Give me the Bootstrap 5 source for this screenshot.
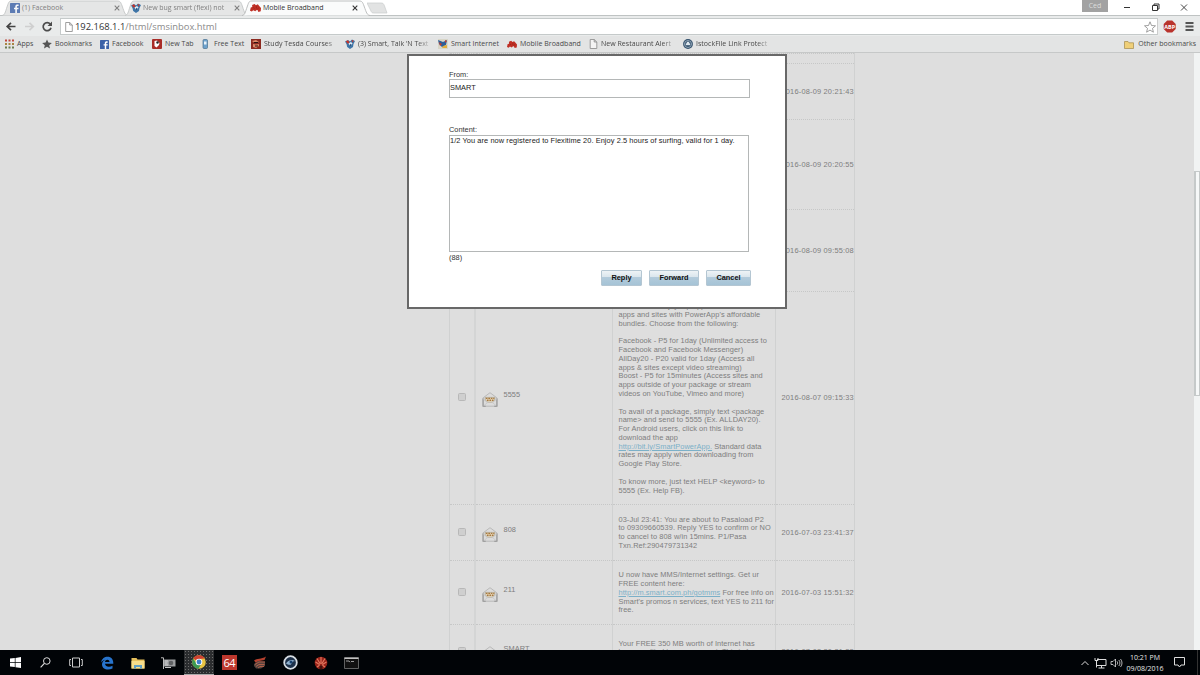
<!DOCTYPE html>
<html lang="en">
<head>
    <meta charset="UTF-8">
    <meta name="viewport" content="width=device-width, initial-scale=1.0">
    <title>Mobile Broadband</title>
    <link rel="stylesheet" href="https://cdn.jsdelivr.net/npm/bootstrap@5.3.0/dist/css/bootstrap.min.css">
    <style>
        body { width: 1200px; height: 675px; font-family: "Liberation Sans", Arial, sans-serif; font-size: 7.4px; line-height: 8.78px; background: #dedede; }
        svg { flex: none; display: block; }

        /* browser chrome */
        .browser-ui { font-family: "Open Sans", "Noto Sans", sans-serif; font-size: 7px; line-height: 10px; color: #484848; white-space: nowrap; }
        .tab-strip { height: 16px; background: #fff; border-bottom: 1px solid #bfc3c3; }
        .tab-item { height: 16px; padding: 0 8px 0 8px; color: #808080; margin-right: -3px; }
        .tab-item .tab-shape { position: absolute; left: 0; top: 0; width: 100%; height: 16px; }
        .tab-item > .tab-inner { z-index: 1; }
        .tab-one { width: 126px; margin-left: 2px; }
        .tab-two { width: 123px; padding-left: 6px; letter-spacing: -.03px; }
        .tab-three { width: 128px; margin-left: -3px; color: #333; z-index: 2; }
        .tab-title { flex: 1; margin-left: 2px; }
        .fade-end { -webkit-mask-image: linear-gradient(to right, #000 86%, rgba(0, 0, 0, .2)); mask-image: linear-gradient(to right, #000 86%, rgba(0, 0, 0, .2)); }
        .user-tag { width: 26px; height: 12px; background: #a2a2a2; color: #ddd; line-height: 11px; margin-right: 15px; }
        .address-bar { height: 20px; background: #e9ebeb; }
        .url-box { height: 17px; margin-top: 2px; background: #fff; border: 1px solid #c5caca; border-right-color: #ccc; font-size: 9.4px; color: #8a8a8a; line-height: 15px; }
        .url-text { padding-left: 2px; }
        .url-box b { font-weight: 400; color: #333; }
        .bookmark-bar { height: 17px; background: #e3e4e4; border-bottom: 1px solid #c6c8c8; padding-left: 4px; letter-spacing: .02px; }
        .bookmark-item svg { margin-right: 3px; }
        .bookmark-item:nth-child(1) { width: 38px; }
        .bookmark-item:nth-child(2) { width: 58px; }
        .bookmark-item:nth-child(3) { width: 52px; }
        .bookmark-item:nth-child(4) { width: 49px; }
        .bookmark-item:nth-child(5) { width: 50px; }
        .bookmark-item:nth-child(6) { width: 86px; margin-right: 8px; }
        .bookmark-item:nth-child(7) { width: 84px; margin-right: 9px; letter-spacing: -.02px; }
        .bookmark-item:nth-child(8) { width: 69px; }
        .bookmark-item:nth-child(9) { width: 82px; }
        .bookmark-item:nth-child(10) { width: 85px; margin-right: 9px; }
        .bookmark-item:nth-child(11) { width: 86px; }

        /* page behind the dialog */
        .page-view { height: 597px; background: #dedede; }
        .inbox { width: 405px; margin-left: 449px; table-layout: fixed; color: #7d7d7d; border-collapse: collapse; letter-spacing: .07px; }
        .inbox td { border: 1px solid #d0d1d1; border-style: dotted solid; padding: 1.500px 0 0 5.500px; vertical-align: middle; white-space: nowrap; }
        .inbox tr > td { border-top-color: #c6c7c7; border-bottom-color: #c6c7c7; }
        .inbox td:first-child { border-right: 2px solid #d4d5d5; }
        .inbox a { color: #7bb0c8; }
        .inbox .mail-cell { padding: 0 0 1px 6px; }
        .sender { padding-bottom: 4px; padding-left: 6px; }
        .inbox .when { letter-spacing: .2px; padding-left: 5.500px; }
        .inbox .check-cell { padding: 0 0 2px 8px; }
        .tick-box { width: 8px; height: 8px; border: 1px solid #b8b8b8; border-radius: 1.500px; background: #cfcfcf; }
        .h-first { height: 10px; }
        .h-one { height: 56px; }
        .h-two { height: 90px; }
        .h-three { height: 82px; }
        .h-four { height: 213px; }
        .h-six { height: 64px; }
        .h-last { height: 55px; }

        /* message dialog */
        .message-box { left: 407px; top: 54px; width: 380px; height: 255px; border: 2px solid #686868; background: #fff; color: #333; padding: 15px 34px 0 40px; z-index: 5; }
        .from-input { width: 301px; height: 19px; border: 1px solid #b4b7b7; padding: 4px 0 0 0; color: #222; margin-bottom: 28px; }
        .from-label { margin-bottom: -.6px; }
        .content-label { margin-bottom: -.4px; }
        .content-input { width: 300px; height: 117px; border: 1px solid #b4b7b7; color: #222; letter-spacing: .08px; margin-bottom: 2px; line-height: 9px; }
        .button-row { margin-top: 8px; gap: 7px; }
        .btn-modem { --bs-btn-padding-x: 0; --bs-btn-padding-y: 0; --bs-btn-font-size: 7.4px; --bs-btn-line-height: 14px; --bs-btn-border-radius: 1px; height: 16px; font-weight: 700; color: #111; border: 1px solid #b4c6d2; background: linear-gradient(#eef3f6 0, #dbe6ed 42%, #b3cbdb 45%, #a5c3d6 100%); }
        .w-reply { width: 41px; }
        .w-forward { width: 50px; }
        .w-cancel { width: 45px; }

        .scroll-track { right: 0; top: 53px; width: 6px; height: 597px; background: #f1f3f3; z-index: 3; }
        .scroll-thumb { margin-top: 118px; height: 225px; border: 1px solid #c5c9c9; border-width: 1px 1px 1px 2px; background: #f6f8f8; }

        /* taskbar */
        .win-taskbar { height: 25px; background: #010407; color: #e8e8e8; font-family: "Open Sans", "Noto Sans", sans-serif; font-size: 7px; line-height: 11px; }
        .task-cell { width: 30.6px; height: 25px; }
        .task-cell.running { background: radial-gradient(#6c6c6c 25%, #2b2d2f 30%) 0 0 / 3px 3px; border-bottom: 1px solid #aaa; }
        .clock { width: 40px; margin-right: 9px; letter-spacing: -.04px; }
        .desk-edge { width: 1px; height: 25px; background: #333; margin: 0 2px 0 12px; }
    </style>
</head>
<body class="overflow-hidden position-relative">
    <!-- shared icons -->
    <svg width="0" height="0" class="position-absolute">
        <symbol id="i-fb" viewBox="0 0 10 10"><rect width="10" height="10" rx=".6" fill="#3c62a8"/><path d="M6.900 10V6.200h1.500l.2-1.500H6.900V3.800c0-.5.2-.8.8-.8h.9V1.600C7 1.300 5.300 1.600 5.300 3.600v1.100H4v1.500h1.300V10z" fill="#fff"/></symbol>
        <symbol id="i-smart" viewBox="0 0 10 10"><path d="M0 2.500 3 1l2 1.500L7 .6 10 2 8.500 5 8 8 5 10 2.200 8 1.500 5z" fill="#3d75a8"/><path d="M.8 2.300 3 1.300l1.500 2L3 5zM6.500 1l2.300.7L7.500 3.500z" fill="#c5352b"/><path d="M3.500 4.500 6 3l1.500 1.500-2.200 3z" fill="#eef3f8"/><path d="M4.500 6l1.500-1.500.5 1.500L5 8z" fill="#27517d"/></symbol>
        <symbol id="i-huawei" viewBox="0 0 12 10"><path d="M0 8 .8 4.500 2.500 4 2.300 1.800 5 .5 6.500 2 8.500 1 10.300 3 12 5 11.700 8.500 9.200 9.300 8.200 7.200 6.800 7.400 5.800 8.500 3.500 7.400 2 8.800z" fill="#bf2f25"/><path d="M3.500 4.500 5 5.500M7 3v2.500M9.500 5 8 6" stroke="#8c1c14" stroke-width=".6"/></symbol>
        <symbol id="i-page" viewBox="0 0 8 10"><path d="M.7.5h4L7.300 3v6.500H.7zM4.700.5V3h2.600" fill="#fff" fill-opacity=".6" stroke="#888" stroke-width=".8"/></symbol>
        <symbol id="i-close" viewBox="0 0 6 6"><path d="M.7.7l4.600 4.600M5.300.7.7 5.300" stroke="currentColor" stroke-width="1.100"/></symbol>
        <symbol id="i-mail" viewBox="0 0 15 14"><path d="M1 5.500 7.500.6 14 5.500V13.300H1z" fill="#dcdcdc" stroke="#b2b2b2" stroke-width=".8"/><path d="M3 5h9v2.500L9.500 9.500h-4L3 7.500z" fill="#e8dcc2" stroke="#a09a8c" stroke-width=".6"/><path d="M3.600 6h8M4.600 7.700h6.200" stroke="#a87a40" stroke-width="1.200" stroke-dasharray="1.600 .7"/><path d="M1 6v7.300h2.500M14 6v7.300h-2.500" fill="none" stroke="#959595" stroke-width="1"/><path d="M1 6.500 5 10l-3.500 3M14 6.500 10 10l3.500 3" fill="none" stroke="#c0c0c0" stroke-width=".6"/></symbol>
        <symbol id="t-on" viewBox="0 0 129 16" preserveAspectRatio="none"><path d="M0 15.500C3 15 3 13 5.500 6 7 1.500 7.500 1 10 1h108c3 0 3.500 1 5 5 2.500 7 3 9 6 9.500" fill="#fafbfb" stroke="#b6b9b9" stroke-width=".9"/></symbol>
        <symbol id="t-off" viewBox="0 0 129 16" preserveAspectRatio="none"><path d="M0 15.500C3 15 3 13 5.500 6 7 1.500 7.500 1 10 1h108c3 0 3.500 1 5 5 2.500 7 3 9 6 9.500" fill="#e5e6e6" stroke="#c3c6c6" stroke-width=".9"/></symbol>
    </svg>

    <header class="browser-ui">
        <div class="tab-strip d-flex">
            <div class="tab-item tab-one position-relative d-flex">
                <svg class="tab-shape"><use href="#t-off"/></svg>
                <div class="tab-inner position-relative d-flex align-items-center w-100">
                    <svg width="10" height="10" opacity=".8"><use href="#i-fb"/></svg>
                    <span class="tab-title">(1) Facebook</span>
                    <svg width="6" height="6"><use href="#i-close"/></svg>
                </div>
            </div>
            <div class="tab-item tab-two position-relative d-flex">
                <svg class="tab-shape"><use href="#t-off"/></svg>
                <div class="tab-inner position-relative d-flex align-items-center w-100">
                    <svg width="10" height="10"><use href="#i-smart"/></svg>
                    <span class="tab-title fade-end">New bug smart (flexi) not</span>
                    <svg width="6" height="6"><use href="#i-close"/></svg>
                </div>
            </div>
            <div class="tab-item tab-three position-relative d-flex">
                <svg class="tab-shape"><use href="#t-on"/></svg>
                <div class="tab-inner position-relative d-flex align-items-center w-100">
                    <svg width="11" height="10"><use href="#i-huawei"/></svg>
                    <span class="tab-title">Mobile Broadband</span>
                    <svg width="6" height="6" class="me-1"><use href="#i-close"/></svg>
                </div>
            </div>
            <svg width="22" height="16"><path d="M0 3h14c2 0 2.500.5 3.500 3l2.500 7H7c-2 0-2.500-.5-3.500-3z" fill="#e2e3e3" stroke="#c9cccc" stroke-width=".7"/></svg>
            <div class="user-tag text-center ms-auto">Ced</div>
            <svg width="77" height="15" fill="none" stroke="#333"><path d="M1 7.500h6" stroke-width="1"/><path d="M29.500 5.500h5v5h-5zM31 5.500V4h5v5h-1.500" stroke-width="1"/><path d="M58 4.500l6 6M64 4.500l-6 6" stroke-width=".9"/></svg>
        </div>

        <div class="address-bar d-flex">
            <svg width="60" height="20" fill="none"><path d="M15.500 10.500h-8M11 6.800 7.200 10.500l3.800 3.700" stroke="#444" stroke-width="1.700"/><path d="M25 10.500h8M29.500 6.800l3.800 3.700-3.800 3.700" stroke="#cfcfcf" stroke-width="1.700"/><path d="M50.300 8.200A4 4 0 1 0 51 11.800" stroke="#4c4c4c" stroke-width="1.700"/><path d="M52 5.500V10h-4.500z" fill="#4c4c4c"/></svg>
            <div class="url-box d-flex align-items-center flex-grow-1">
                <svg width="8" height="10" class="ms-1"><use href="#i-page"/></svg>
                <span class="url-text"><b>192.168.1.1</b>/html/smsinbox.html</span>
                <svg width="13" height="12" class="ms-auto" viewBox="0 0 13 12"><path d="M6 .8l1.500 3.700 4 .3-3 2.600.9 3.800L6 9.100l-3.400 2.100.9-3.800-3-2.600 4-.3z" fill="#fff" stroke="#888" stroke-width=".8"/></svg>
            </div>
            <svg width="42" height="20"><path d="M9.200 4.500h5l3.500 3.500v5l-3.500 3.500h-5L5.700 13V8z" fill="#b9332c"/><text x="11.700" y="12.600" font-size="5.500" font-weight="700" fill="#fff" text-anchor="middle">ABP</text><path d="M27.500 7h8M27.500 10.500h8M27.500 14h8" stroke="#555" stroke-width="1.900"/></svg>
        </div>

        <div class="bookmark-bar d-flex align-items-center">
            <div class="bookmark-item d-flex align-items-center"><svg width="10" height="10"><path d="M1 1.500h9" stroke="#c0483c" stroke-width="2" stroke-dasharray="2 1.500"/><path d="M1 5h9" stroke="#a88440" stroke-width="2" stroke-dasharray="2 1.500"/><path d="M1 8.500h9" stroke="#6d7c50" stroke-width="2" stroke-dasharray="2 1.500"/></svg>Apps</div>
            <div class="bookmark-item d-flex align-items-center"><svg width="10" height="10"><path d="M5 .4l1.400 3.200 3.500.3-2.700 2.300.8 3.400L5 7.800 2 9.600l.8-3.400L.1 3.900l3.500-.3z" fill="#555"/></svg>Bookmarks</div>
            <div class="bookmark-item d-flex align-items-center"><svg width="9" height="9"><use href="#i-fb"/></svg>Facebook</div>
            <div class="bookmark-item d-flex align-items-center"><svg width="10" height="10"><rect width="10" height="10" rx="1" fill="#a92c27"/><path d="M2.500 2 5 1.500 7.500 4 7 6 4.500 8.500 2.500 7z" fill="#fff"/><circle cx="5.500" cy="3.500" r="1.200" fill="#222"/></svg>New Tab</div>
            <div class="bookmark-item d-flex align-items-center"><svg width="10" height="10"><rect x="2" y=".5" width="4.500" height="9" rx="1" fill="#6ea2cc" stroke="#48708f" stroke-width=".7"/><path d="M3 2.500h2.500v3H3z" fill="#e8f2fa"/></svg>Free Text</div>
            <div class="bookmark-item fade-end d-flex align-items-center"><svg width="10" height="10"><rect width="10" height="10" fill="#8c2a20"/><path d="M1 2l4-1 3 2-2 1-3-.5zM2 5l3 .5L8 5v2L5 9 2 8z" fill="#db8a6a"/><path d="M3 3.500h4M4 7h3" stroke="#2d1411"/></svg>Study Tesda Courses</div>
            <div class="bookmark-item fade-end d-flex align-items-center"><svg width="10" height="10"><use href="#i-smart"/></svg>(3) Smart, Talk 'N Text</div>
            <div class="bookmark-item d-flex align-items-center"><svg width="10" height="10"><rect width="10" height="10" fill="#d8d6c8"/><path d="M0 1l5 2 4-2-1 5-4 2-3-3z" fill="#2e5f9a"/><path d="M1 3l3 2-2 2zM7 1l2 1-2 2z" fill="#c33c2c"/><path d="M5 7l4-1v3H4z" fill="#e2ad3c"/></svg>Smart Internet</div>
            <div class="bookmark-item d-flex align-items-center"><svg width="10" height="9"><use href="#i-huawei"/></svg>Mobile Broadband</div>
            <div class="bookmark-item fade-end d-flex align-items-center"><svg width="9" height="10"><use href="#i-page"/></svg>New Restaurant Alert</div>
            <div class="bookmark-item fade-end d-flex align-items-center"><svg width="10" height="10"><circle cx="5" cy="5" r="4.900" fill="#33506c"/><circle cx="5" cy="5" r="3.500" fill="none" stroke="#b9c8d6" stroke-width=".7"/><path d="M3 6V4.500h4V6zM4 4.500V3h2v1.500" fill="#dfe8ef" stroke="#dfe8ef" stroke-width=".4"/></svg>IstockFile Link Protect</div>
            <div class="d-flex align-items-center ms-auto me-1"><svg width="10" height="9" class="me-1"><path d="M.5 8.500v-7h3.500l1 1.300h4.500v5.700z" fill="#efcf78" stroke="#a38a4b" stroke-width=".7"/></svg>Other bookmarks</div>
        </div>
    </header>

    <main class="page-view overflow-hidden">
        <table class="inbox">
            <colgroup><col width="25"><col width="138"><col width="163"><col width="79"></colgroup>
            <tr class="h-first"><td></td><td></td><td></td><td></td></tr>
            <tr class="h-one"><td></td><td></td><td></td><td class="when">2016-08-09 20:21:43</td></tr>
            <tr class="h-two"><td></td><td></td><td></td><td class="when">2016-08-09 20:20:55</td></tr>
            <tr class="h-three"><td></td><td></td><td></td><td class="when">2016-08-09 09:55:08</td></tr>
            <tr class="h-four">
                <td class="check-cell"><div class="tick-box"></div></td>
                <td class="mail-cell"><div class="d-flex align-items-center"><svg width="16" height="15" class="mt-1"><use href="#i-mail"/></svg><span class="sender">5555</span></div></td>
                <td>With Smart, enjoy top apps<br>apps and sites with PowerApp's affordable<br>bundles. Choose from the following:<br><br>Facebook - P5 for 1day (Unlimited access to<br>Facebook and Facebook Messenger)<br>AllDay20 - P20 valid for 1day (Access all<br>apps &amp; sites except video streaming)<br>Boost - P5 for 15minutes (Access sites and<br>apps outside of your package or stream<br>videos on YouTube, Vimeo and more)<br><br>To avail of a package, simply text &lt;package<br>name&gt; and send to 5555 (Ex. ALLDAY20).<br>For Android users, click on this link to<br>download the app<br><a href="#">http://bit.ly/SmartPowerApp.</a> Standard data<br>rates may apply when downloading from<br>Google Play Store.<br><br>To know more, just text HELP &lt;keyword&gt; to<br>5555 (Ex. Help FB).</td>
                <td class="when">2016-08-07 09:15:33</td>
            </tr>
            <tr class="h-one">
                <td class="check-cell"><div class="tick-box"></div></td>
                <td class="mail-cell"><div class="d-flex align-items-center"><svg width="16" height="15" class="mt-1"><use href="#i-mail"/></svg><span class="sender">808</span></div></td>
                <td>03-Jul 23:41: You are about to Pasaload P2<br>to 09309660539. Reply YES to confirm or NO<br>to cancel to 808 w/in 15mins. P1/Pasa<br>Txn.Ref:290479731342</td>
                <td class="when">2016-07-03 23:41:37</td>
            </tr>
            <tr class="h-six">
                <td class="check-cell"><div class="tick-box"></div></td>
                <td class="mail-cell"><div class="d-flex align-items-center"><svg width="16" height="15" class="mt-1"><use href="#i-mail"/></svg><span class="sender">211</span></div></td>
                <td>U now have MMS/Internet settings. Get ur<br>FREE content here:<br><a href="#">http://m.smart.com.ph/gotmms</a> For free info on<br>Smart's promos n services, text YES to 211 for<br>free.</td>
                <td class="when">2016-07-03 15:51:32</td>
            </tr>
            <tr class="h-last">
                <td class="check-cell"><div class="tick-box"></div></td>
                <td class="mail-cell"><div class="d-flex align-items-center"><svg width="16" height="15" class="mt-1"><use href="#i-mail"/></svg><span class="sender">SMART</span></div></td>
                <td>Your FREE 350 MB worth of Internet has<br>been credited to your account. This is free<br>for 7 days.</td>
                <td class="when">2016-07-02 20:31:22</td>
            </tr>
        </table>
    </main>

    <section class="message-box position-absolute">
        <div class="from-label">From:</div>
        <div class="from-input">SMART</div>
        <div class="content-label">Content:</div>
        <div class="content-input text-nowrap">1/2 You are now registered to Flexitime 20. Enjoy 2.5 hours of surfing, valid for 1 day.</div>
        <div>(88)</div>
        <div class="button-row d-flex justify-content-end">
            <button class="btn btn-modem w-reply">Reply</button>
            <button class="btn btn-modem w-forward">Forward</button>
            <button class="btn btn-modem w-cancel">Cancel</button>
        </div>
    </section>

    <div class="scroll-track position-absolute overflow-hidden"><div class="scroll-thumb"></div></div>

    <footer class="win-taskbar d-flex align-items-center position-relative">
        <div class="task-cell d-flex align-items-center justify-content-center"><svg width="11" height="11"><path d="M0 1.600 4.800 1v4.200H0zM5.500.9 11 0v5.200H5.500zM0 5.900h4.800v4.200L0 9.500zM5.500 5.900H11V11l-5.500-.8z" fill="#fff"/></svg></div>
        <div class="task-cell d-flex align-items-center justify-content-center"><svg width="11" height="11" fill="none" stroke="#ddd"><circle cx="6.800" cy="4" r="3.300"/><path d="M4.400 6.400.6 10.300" stroke-width="1.200"/></svg></div>
        <div class="task-cell d-flex align-items-center justify-content-center"><svg width="14" height="11" fill="none" stroke="#ccc"><path d="M3.500 1h7v9h-7zM2 2.500H.7v6H2M12 2.500h1.300v6H12"/></svg></div>
        <div class="task-cell d-flex align-items-center justify-content-center"><svg width="14" height="14"><path d="M1 6.500C2 2.500 4.500.8 7.500.8c4 0 6 3 5.800 7H5c.3 3.400 4.800 3.600 7.500 1.900v2.700C7.500 14.800 2 13 2 8.500c0-2.300 1.300-4 3.400-4.800C3.500 4 2 5 1 6.500zM5 6h4.500C9.500 3 5.300 3 5 6z" fill="#2874cc" fill-rule="evenodd"/></svg></div>
        <div class="task-cell d-flex align-items-center justify-content-center"><svg width="14" height="12"><path d="M.5 1h5l1 1.500h7v9H.5z" fill="#e6c05c"/><path d="M.5 4h13v7.500H.5z" fill="#f7dd8a"/><path d="M3 11.500V8h8v3.500H9V10H5v1.500z" fill="#5f9fc4"/></svg></div>
        <div class="task-cell d-flex align-items-center justify-content-center"><svg width="15" height="12"><path d="M0 .8h2.500V12" fill="none" stroke="#bbb"/><path d="M3 2.500h11.500v7H3z" fill="#9a9c9e"/><circle cx="10" cy="6" r="2.300" fill="#5f6163"/><path d="M4 4h3M4 6h2.500M4 8h3M4 10.500h6" stroke="#ddd" stroke-width=".9"/></svg></div>
        <div class="task-cell running d-flex align-items-center justify-content-center"><svg width="14" height="14"><circle cx="7" cy="7" r="6.800" fill="#e9c443"/><path d="M7 7 1.100 3.600A6.800 6.800 0 0 1 12.900 3.600L7 4z" fill="#cf4031"/><path d="M1.100 3.600A6.800 6.800 0 0 0 6.500 13.800L9 9.500 4.500 8.500z" fill="#3d9a53"/><circle cx="7" cy="7" r="3.300" fill="#fff"/><circle cx="7" cy="7" r="2.400" fill="#3f7fca"/></svg></div>
        <div class="task-cell d-flex align-items-center justify-content-center"><svg width="15" height="15"><rect width="15" height="15" fill="#bd382e"/><text x="7.500" y="11.500" font-size="11" fill="#fff" text-anchor="middle" textLength="12">64</text></svg></div>
        <div class="task-cell d-flex align-items-center justify-content-center"><svg width="14" height="13"><path d="M1 4.500C4 2 8 3.500 13 .5L11.500 4 6 5 3 7z" fill="#b5412f"/><path d="M1 8l4-3 7 .5V10l-4 2.500H3L1 10z" fill="#57443e"/><path d="M2 8.500l4-2.500h6M3 10.500l3-2h5.500M5 12l2-1.500h4" stroke="#b9604a" stroke-width=".9" fill="none"/></svg></div>
        <div class="task-cell d-flex align-items-center justify-content-center"><svg width="15" height="15"><circle cx="7.500" cy="7.500" r="6.300" fill="#1c3049" stroke="#d6dde3" stroke-width="1.800"/><path d="M3 8.500C5 5 9 4 12 6c-2 0-3 1-4 3.500-1 .6-3 .5-5-1z" fill="#8eb1cf"/><circle cx="8" cy="7" r="1.500" fill="#153e6c"/></svg></div>
        <div class="task-cell d-flex align-items-center justify-content-center"><svg width="14" height="14"><circle cx="7" cy="7" r="6.300" fill="#992319"/><path d="M7 1v7M3 2.500l3 5M11 2.500l-3 5M1.500 6l4 2.500M12.500 6l-4 2.500M3 11l3-2M11 11 8 9" stroke="#e37a61" stroke-width="1.100"/><path d="M5.500 13V9.500h3V13z" fill="#43110d"/></svg></div>
        <div class="task-cell d-flex align-items-center justify-content-center"><svg width="15" height="12"><path d="M.5.5h14v11H.5z" fill="#111" stroke="#777" stroke-width=".8"/><path d="M.5 1.300h14" stroke="#ccc" stroke-width="1.300"/><path d="M2 4h3l1 1.200M7 4.500h3" stroke="#aaa" stroke-width=".9" fill="none"/></svg></div>

        <svg width="46" height="14" class="ms-auto" fill="none" stroke="#ddd"><path d="M2.500 9l3.500-3.500L9.500 9"/><path d="M18 3.500h9v6h-9M19.500 12h6M22.500 9.500V12M16 2v2.500h3V2M17.500 4.500v7"/><path d="M32 5.500h2L36.500 3v8L34 8.500h-2zM38 5.300c.8 1 .8 2.400 0 3.400M39.800 4c1.500 1.700 1.500 4.300 0 6M41.500 3c2 2.300 2 5.700 0 8" stroke-width=".8"/></svg>
        <div class="clock text-center text-nowrap">10:21 PM<br>09/08/2016</div>
        <svg width="11" height="11" fill="none" stroke="#ddd"><path d="M.5.500h10v7.500H7L5.500 10 4 8H.5z"/></svg>
        <div class="desk-edge"></div>
    </footer>

    <script src="https://cdn.jsdelivr.net/npm/bootstrap@5.3.0/dist/js/bootstrap.bundle.min.js"></script>
</body>
</html>
